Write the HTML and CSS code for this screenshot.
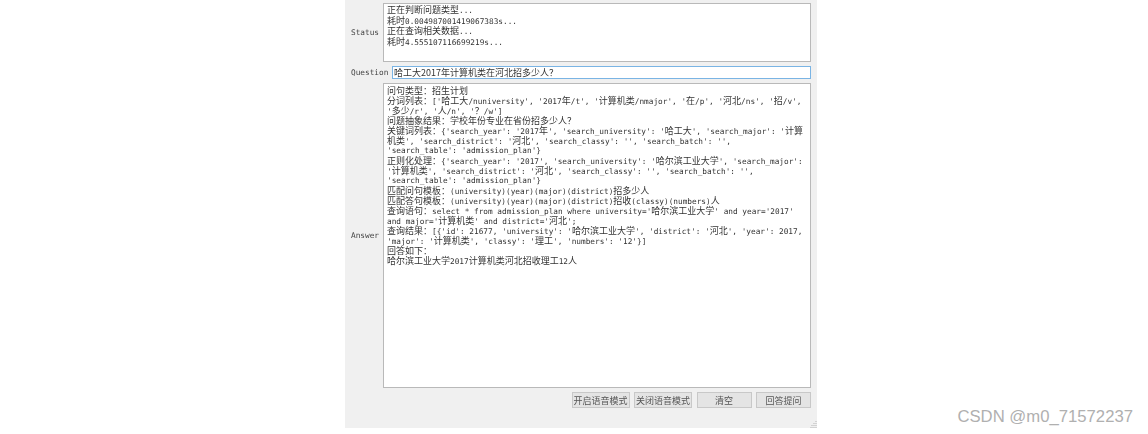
FILE: index.html
```html
<!DOCTYPE html>
<html lang="zh">
<head>
<meta charset="utf-8">
<title>Question answering</title>
<link rel="stylesheet" href="styles.css">
</head>
<body>
<main class="window">
  <section class="row status-row">
    <label class="label">Status</label>
    <div class="box status-box">
      <div><span class="c">正在判断问题类型</span>...</div>
      <div><span class="c">耗时</span>0.004987001419067383s...</div>
      <div><span class="c">正在查询相关数据</span>...</div>
      <div><span class="c">耗时</span>4.555107116699219s...</div>
    </div>
  </section>
  <section class="row question-row">
    <label class="label" for="q">Question</label>
    <input id="q" class="input" value="哈工大2017年计算机类在河北招多少人？">
  </section>
  <section class="row answer-row">
    <label class="label">Answer</label>
    <div class="box answer-box">
      <div><span class="c">问句类型：招生计划</span></div>
      <div><span class="c">分词列表：</span>['<span class="c">哈工大</span>/nuniversity', '2017<span class="c">年</span>/t', '<span class="c">计算机类</span>/nmajor', '<span class="c">在</span>/p', '<span class="c">河北</span>/ns', '<span class="c">招</span>/v',</div>
      <div>'<span class="c">多少</span>/r', '<span class="c">人</span>/n', '<span class="c">？</span>/w']</div>
      <div><span class="c">问题抽象结果：学校年份专业在省份招多少人？</span></div>
      <div><span class="c">关键词列表：</span>{'search_year': '2017<span class="c">年</span>', 'search_university': '<span class="c">哈工大</span>', 'search_major': '<span class="c">计算</span></div>
      <div><span class="c">机类</span>', 'search_district': '<span class="c">河北</span>', 'search_classy': '', 'search_batch': '',</div>
      <div>'search_table': 'admission_plan'}</div>
      <div><span class="c">正则化处理：</span>{'search_year': '2017', 'search_university': '<span class="c">哈尔滨工业大学</span>', 'search_major':</div>
      <div>'<span class="c">计算机类</span>', 'search_district': '<span class="c">河北</span>', 'search_classy': '', 'search_batch': '',</div>
      <div>'search_table': 'admission_plan'}</div>
      <div><span class="c">匹配问句模板：</span>(university)(year)(major)(district)<span class="c">招多少人</span></div>
      <div><span class="c">匹配答句模板：</span>(university)(year)(major)(district)<span class="c">招收</span>(classy)(numbers)<span class="c">人</span></div>
      <div><span class="c">查询语句：</span>select * from admission_plan where university='<span class="c">哈尔滨工业大学</span>' and year='2017'</div>
      <div>and major='<span class="c">计算机类</span>' and district='<span class="c">河北</span>';</div>
      <div><span class="c">查询结果：</span>[{'id': 21677, 'university': '<span class="c">哈尔滨工业大学</span>', 'district': '<span class="c">河北</span>', 'year': 2017,</div>
      <div>'major': '<span class="c">计算机类</span>', 'classy': '<span class="c">理工</span>', 'numbers': '12'}]</div>
      <div><span class="c">回答如下：</span></div>
      <div><span class="c">哈尔滨工业大学</span>2017<span class="c">计算机类河北招收理工</span>12<span class="c">人</span></div>
    </div>
  </section>
  <section class="actions">
    <button class="btn btn-wide">开启语音模式</button>
    <button class="btn btn-wide">关闭语音模式</button>
    <button class="btn btn-narrow">清空</button>
    <button class="btn btn-narrow">回答提问</button>
  </section>
  <svg class="grip" width="7" height="7" viewBox="0 0 7 7"><path d="M6 0v1M4 2v1M6 2v1M2 4v1M4 4v1M6 4v1M0 6v1M2 6v1M4 6v1M6 6v1" stroke="#b5b5b5" fill="none"/></svg>
</main>
<footer class="mark">CSDN @m0_71572237</footer>
</body>
</html>
```
FILE: styles.css
```css
html, body {
  margin: 0;
  height: 434px;
  background: #fff;
  overflow: hidden;
}
body {
  position: relative;
  font-family: "DejaVu Sans Mono", "Noto Sans CJK SC", monospace;
  font-size: 7.75px;
  line-height: 10px;
  color: #333;
}
.window {
  position: relative;
  box-sizing: border-box;
  width: 472px;
  height: 428px;
  margin-left: 345px;
  padding: 3px 6px 0;
  background: #f0f0f0;
  display: flex;
  flex-direction: column;
  gap: 4px;
  filter: blur(0.3px);
}
.row {
  display: flex;
  align-items: center;
}
.label {
  flex: none;
  width: 32px;
  color: #444;
}
.question-row .label { width: 41px; }
.box {
  flex: 1;
  box-sizing: border-box;
  background: #fff;
  border: 1px solid #b9b9b9;
  padding: 2px 3px;
  overflow: hidden;
}
.box > div {
  height: 10px;
  white-space: pre;
}
.status-box { height: 59px; padding-top: 1px; }
.status-box > div { height: 10.6px; }
.answer-box { height: 305px; }
.c {
  font-family: "Noto Sans CJK SC", sans-serif;
  font-size: 9px;
  line-height: 10px;
}
.input {
  flex: 1;
  min-width: 0;
  box-sizing: border-box;
  height: 13px;
  margin: 0;
  padding: 0 1px;
  border: 1px solid #7ab4e4;
  outline: none;
  background: #fff;
  color: #333;
  font-family: "Noto Sans CJK SC", sans-serif;
  font-size: 9px;
}
.actions {
  display: flex;
  justify-content: flex-end;
  gap: 4.5px;
}
.btn {
  box-sizing: border-box;
  height: 16px;
  margin: 0;
  padding: 0;
  border: 1px solid #c8c8c8;
  background: #e4e4e4;
  color: #555;
  font-family: "Noto Sans CJK SC", sans-serif;
  font-size: 9px;
}
.btn-wide { width: 58px; }
.btn-narrow { width: 55px; }
.grip {
  position: absolute;
  right: 0;
  bottom: 0;
}
.mark {
  position: absolute;
  right: 15px;
  top: 407px;
  font-family: "Liberation Sans", sans-serif;
  font-size: 16.7px;
  line-height: 20px;
  color: #b0b0b0;
}
```
